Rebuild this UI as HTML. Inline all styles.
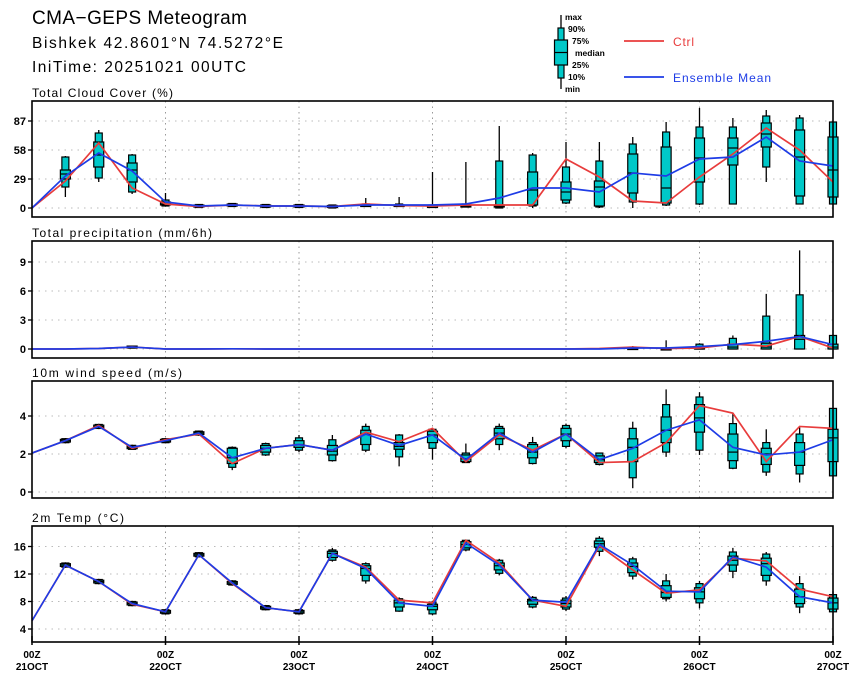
<!DOCTYPE html>
<html><head><meta charset="utf-8"><style>
html,body{margin:0;padding:0;background:#fff;width:860px;height:680px;overflow:hidden}
svg{display:block}
</style></head><body>
<svg id="s" width="860" height="680" xmlns="http://www.w3.org/2000/svg" font-family="Liberation Sans, sans-serif">
<text x="32" y="24" font-size="19" textLength="215" lengthAdjust="spacing">CMA−GEPS Meteogram</text>
<text x="32" y="48" font-size="15.5" textLength="251" lengthAdjust="spacing">Bishkek 42.8601°N 74.5272°E</text>
<text x="32" y="72" font-size="15.5" textLength="214" lengthAdjust="spacing">IniTime: 20251021 00UTC</text>
<g font-size="8.5" font-weight="bold">
<line x1="561" y1="15" x2="561" y2="89" stroke="#000" stroke-width="1.3"/>
<rect x="558" y="28" width="6" height="50" fill="#00c8c8" stroke="#000" stroke-width="1.2"/>
<rect x="554.5" y="40" width="13" height="25" fill="#00c8c8" stroke="#000" stroke-width="1.2"/>
<line x1="554.5" y1="52.5" x2="567.5" y2="52.5" stroke="#000" stroke-width="1.2"/>
<text x="565" y="20">max</text><text x="568" y="32">90%</text><text x="572" y="44">75%</text>
<text x="575" y="56">median</text><text x="572" y="68">25%</text><text x="568" y="80">10%</text><text x="565" y="92">min</text>
</g>
<line x1="624" y1="41" x2="664" y2="41" stroke="#e83c3c" stroke-width="1.8"/>
<text x="673" y="46" font-size="12" fill="#e83c3c" textLength="21" lengthAdjust="spacing">Ctrl</text>
<line x1="624" y1="77" x2="664" y2="77" stroke="#1e3ce6" stroke-width="1.8"/>
<text x="673" y="82" font-size="12" fill="#1e3ce6" textLength="98" lengthAdjust="spacing">Ensemble Mean</text>
<g id="plots"></g>
</svg>
<script>
var NS="http://www.w3.org/2000/svg",G=document.getElementById('plots');
function el(t,a,txt){var e=document.createElementNS(NS,t);for(var k in a)e.setAttribute(k,a[k]);if(txt!=null)e.textContent=txt;G.appendChild(e);return e;}
var X0=32,X1=833,DX=(X1-X0)/24;function xx(i){return X0+DX*i;}
function panel(p){
 el('text',{x:32,y:p.top-4,'font-size':12,textLength:p.tl,lengthAdjust:'spacing'},p.title);
 p.ticks.forEach(function(t){var y=p.y(t);el('line',{x1:X0,y1:y,x2:X1,y2:y,stroke:'#bbb','stroke-width':1,'stroke-dasharray':'1.5,5'});
  el('line',{x1:X0-4,y1:y,x2:X0,y2:y,stroke:'#000','stroke-width':1.3});
  el('text',{x:X0-6,y:y+4,'font-size':11,'font-weight':'bold','text-anchor':'end'},String(t));});
 for(var d=1;d<6;d++){var x=xx(d*4);el('line',{x1:x,y1:p.top,x2:x,y2:p.bot,stroke:'#999','stroke-width':1,'stroke-dasharray':'1.5,4'});}
 p.box.forEach(function(b,i){if(!b)return;var x=xx(i);
  el('line',{x1:x,y1:p.y(b[0]),x2:x,y2:p.y(b[6]),stroke:'#000','stroke-width':1.3});
  var a=p.y(b[1]),c=p.y(b[5]);el('rect',{x:x-3.5,y:a,width:7,height:Math.max(c-a,1.5),fill:'#00c8c8',stroke:'#000','stroke-width':1.2});
  a=p.y(b[2]);c=p.y(b[4]);el('rect',{x:x-5,y:a,width:10,height:Math.max(c-a,1.5),fill:'#00c8c8',stroke:'#000','stroke-width':1.2});
  var m=p.y(b[3]);el('line',{x1:x-5,y1:m,x2:x+5,y2:m,stroke:'#000','stroke-width':1.2});});
 function line(v,c){el('polyline',{points:v.map(function(q,i){return xx(i)+','+p.y(q);}).join(' '),fill:'none',stroke:c,'stroke-width':1.7});}
 line(p.ctrl,'#e83c3c');line(p.mean,'#1e3ce6');
 el('rect',{x:X0,y:p.top,width:X1-X0,height:p.bot-p.top,fill:'none',stroke:'#000','stroke-width':1.6});
}
function tight(v,s){return v.map(function(q){return [q+2*s,q+1.5*s,q+s,q,q-s,q-1.5*s,q-2*s].map(function(z){return Math.max(z,0);});});}
var cm=[0,32,55,37,6,2,3,2,2,1.5,3,3,3,4,10,20,20,16,35,32,49,51,71,47,42];
var cc=[0,27,65,20,4,1.5,3,2,2,1.5,4,2.5,2,3,3,3,49,31,7,5,31,54,80,58,26];
var cb=tight(cm,1);cb[0]=null;
cb[1]=[52,51,38,34,29,21,11];cb[2]=[78,75,66,53,41,30,26];cb[3]=[54,53,45,38,26,16,14];cb[4]=[15,8,6,4,3,2,2];
cb[10]=[10,4,3,3,2,2,2];cb[11]=[11,4,3,3,2,2,2];cb[12]=[36,3,2,2,1,1,1];cb[13]=[46,4,3,2,1,1,1];
cb[14]=[82,47,3,2,1,0,0];cb[15]=[55,53,36,18,3,2,0];cb[16]=[66,41,26,16,8,5,4];cb[17]=[66,47,27,21,2,1,0];
cb[18]=[71,64,54,35,15,6,0];cb[19]=[86,76,61,20,5,3,2];cb[20]=[100,81,70,50,26,4,3];cb[21]=[90,81,70,60,43,4,4];
cb[22]=[98,92,85,74,61,41,26];cb[23]=[93,90,78,51,12,4,4];cb[24]=[86,86,71,38,11,4,4];
panel({title:'Total Cloud Cover (%)',tl:141,top:101,bot:217,y:function(v){return 208-v;},ticks:[0,29,58,87],box:cb,mean:cm,ctrl:cc});
var pm=[0,0,0.05,0.2,0,0,0.02,0,0,0,0,0,0,0,0,0,0,0,0.1,0.1,0.25,0.45,0.8,1.3,0.45];
var pc=[0,0,0.05,0.2,0,0,0.02,0,0,0,0,0,0,0,0,0,0,0.05,0.2,0.05,0.1,0.5,0.3,1.3,0.1];
var pb=pm.map(function(){return null;});
pb[3]=[0.3,0.3,0.3,0.2,0.1,0.1,0.1];pb[18]=[0.3,0.2,0.1,0,0,0,0];pb[19]=[0.9,0.1,0.05,0,0,0,0];
pb[20]=[0.6,0.5,0.2,0,0,0,0];pb[21]=[1.4,1.1,0.5,0.2,0,0,0];pb[22]=[5.7,3.4,0.6,0.2,0,0,0];
pb[23]=[10.2,5.6,1.4,1.0,0,0,0];pb[24]=[1.5,1.4,0.5,0.2,0,0,0];
panel({title:'Total precipitation (mm/6h)',tl:180,top:241,bot:358,y:function(v){return 349-9.67*v;},ticks:[0,3,6,9],box:pb,mean:pm,ctrl:pc});
var wm=[2.05,2.7,3.45,2.35,2.7,3.1,1.8,2.3,2.5,2.2,3.05,2.45,3.0,1.7,3.1,2.1,3.05,1.7,2.3,3.25,3.8,2.35,1.95,2.1,2.75];
var wc=[2.05,2.7,3.5,2.3,2.75,3.05,1.5,2.3,2.5,2.2,3.15,2.65,3.35,1.6,3.0,2.2,3.05,1.55,1.6,2.6,4.55,4.15,1.6,3.45,3.35];
var wb=tight(wm,0.07);wb[0]=null;
wb[6]=[2.4,2.35,2.3,1.8,1.5,1.3,1.15];wb[7]=[2.6,2.55,2.45,2.3,2.1,1.95,1.9];wb[8]=[3.0,2.85,2.7,2.5,2.35,2.2,2.1];
wb[9]=[3.0,2.75,2.45,2.15,1.95,1.65,1.6];wb[10]=[3.6,3.45,3.25,3.05,2.5,2.2,2.1];wb[11]=[3.05,3.0,2.6,2.4,2.25,1.85,1.35];
wb[12]=[3.3,3.3,3.2,3.0,2.6,2.3,1.7];wb[13]=[2.55,2.05,1.95,1.75,1.6,1.55,1.55];wb[14]=[3.6,3.45,3.35,3.1,2.8,2.5,2.2];
wb[15]=[2.9,2.6,2.5,2.1,1.8,1.5,1.45];wb[16]=[3.6,3.5,3.35,3.05,2.7,2.4,2.3];wb[17]=[2.05,2.05,1.9,1.7,1.55,1.45,1.4];
wb[18]=[3.7,3.35,2.8,2.35,1.6,0.75,0.2];wb[19]=[5.4,4.6,3.95,3.25,2.6,2.1,1.85];wb[20]=[5.25,5.0,4.6,3.9,3.15,2.2,1.95];
wb[21]=[4.15,3.6,3.05,2.1,1.65,1.25,1.2];wb[22]=[3.3,2.6,2.3,2.0,1.45,1.05,0.85];wb[23]=[3.4,3.05,2.6,2.1,1.4,0.95,0.5];
wb[24]=[4.4,4.4,3.3,2.85,1.6,0.85,0.85];
panel({title:'10m wind speed (m/s)',tl:150,top:381,bot:498,y:function(v){return 492-19*v;},ticks:[0,2,4],box:wb,mean:wm,ctrl:wc});
var tm=[5.2,13.3,10.9,7.7,6.5,14.8,10.7,7.1,6.5,15.0,12.8,7.8,7.3,16.5,13.3,8.2,7.9,16.3,13.3,9.5,9.4,14.5,13.0,8.7,7.8];
var tc=[5.2,13.3,10.9,7.6,6.5,14.8,10.6,7.1,6.5,15.0,13.0,8.2,7.8,16.9,13.6,8.2,7.3,16.1,12.6,9.2,9.7,14.3,13.9,9.8,8.7];
var tb=tight(tm,0.2);tb[0]=null;
tb[9]=[15.8,15.5,15.3,15.0,14.4,14.0,13.8];tb[10]=[13.7,13.5,13.2,12.8,11.8,11.0,10.6];tb[11]=[8.6,8.4,8.2,7.8,7.2,6.6,6.5];
tb[12]=[8.1,7.9,7.6,7.3,6.8,6.2,6.0];tb[13]=[17.0,16.9,16.7,16.3,15.8,15.5,15.3];tb[14]=[14.2,14.0,13.6,13.2,12.6,12.1,11.8];
tb[15]=[8.8,8.6,8.3,8.1,7.6,7.2,7.0];tb[16]=[8.8,8.5,8.2,7.7,7.2,6.9,6.6];tb[17]=[17.5,17.2,16.8,16.4,15.9,15.3,14.6];
tb[18]=[14.5,14.2,13.6,13.1,12.2,11.7,11.2];tb[19]=[12.0,11.0,10.3,9.3,8.6,8.4,8.0];tb[20]=[11.0,10.6,10.0,9.4,8.4,7.8,7.0];
tb[21]=[15.8,15.2,14.6,14.0,13.3,12.4,11.4];tb[22]=[15.2,14.9,14.3,13.5,11.8,11.0,10.3];tb[23]=[11.7,10.6,9.8,8.7,7.7,7.2,6.3];
tb[24]=[9.5,9.0,8.5,7.8,6.9,6.5,6.5];
panel({title:'2m Temp (°C)',tl:92,top:526,bot:642,y:function(v){return 656.5-6.875*v;},ticks:[4,8,12,16],box:tb,mean:tm,ctrl:tc});
for(var d=0;d<7;d++){var x=xx(d*4);
 el('line',{x1:x,y1:636,x2:x,y2:645,stroke:'#000','stroke-width':1.5});
 el('text',{x:x,y:658,'font-size':10,'font-weight':'bold','text-anchor':'middle'},'00Z');
 el('text',{x:x,y:670,'font-size':10,'font-weight':'bold','text-anchor':'middle'},(21+d)+'OCT');}
</script>
</body></html>
